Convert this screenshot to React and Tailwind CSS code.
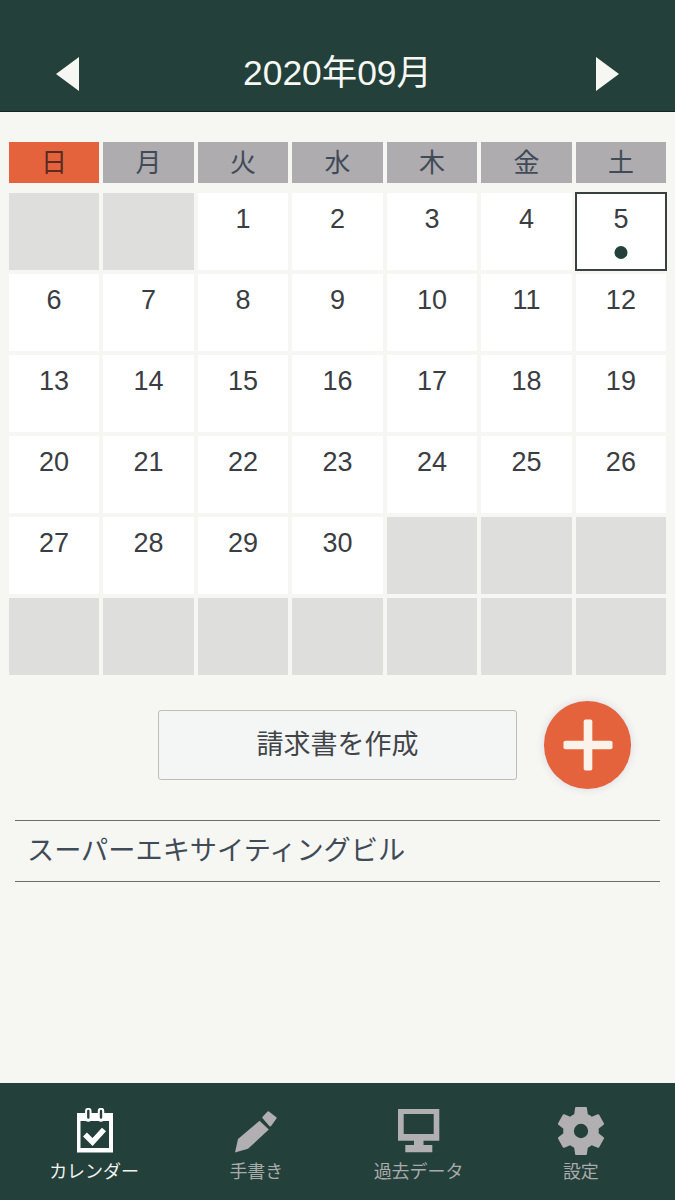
import React from "react";

const FONT = "font-['Liberation_Sans','Noto_Sans_CJK_JP',sans-serif]";
const WEEK = ["日", "月", "火", "水", "木", "金", "土"];
const CELLS = [
  null, null, 1, 2, 3, 4, 5,
  6, 7, 8, 9, 10, 11, 12,
  13, 14, 15, 16, 17, 18, 19,
  20, 21, 22, 23, 24, 25, 26,
  27, 28, 29, 30, null, null, null,
  null, null, null, null, null, null, null,
];

function CalendarIcon() {
  return (
    <svg width="36" height="45" viewBox="0 0 36 45" className="mt-[1px] ml-[1px]">
      <path fillRule="evenodd" fill="#fff" d="M0 5h36v39.500H0zM3.500 13v27H32V13z" />
      <path d="M11.300 3v7.500M24 3v7.500" stroke="#fff" strokeWidth="6.500" strokeLinecap="round" />
      <path d="M11.300 3v6.500M24 3v6.500" stroke="#23403a" strokeWidth="2.400" strokeLinecap="round" />
      <path d="M8 26.500l7.500 7.500L27 21.500" fill="none" stroke="#fff" strokeWidth="5.500" />
    </svg>
  );
}

function PencilIcon() {
  return (
    <svg width="44" height="44" viewBox="0 0 44 44" className="mt-[2px]">
      <path fill="#b1afb1" d="M1 43.500L4 30 25.500 11.800 34.800 20.500 14 39.800z" />
      <path fill="#b1afb1" stroke="#b1afb1" strokeWidth="2" strokeLinejoin="round" d="M29.300 8.500L34.300 3.300 41.700 9 36.300 16.500z" />
    </svg>
  );
}

function MonitorIcon() {
  return (
    <svg width="42" height="44" viewBox="0 0 42 44" className="mt-[2px]">
      <path fillRule="evenodd" fill="#b1afb1" d="M0 0h41.300v31.700H0zM5.700 5v20h30V5z" />
      <path fill="#b1afb1" d="M16 31h9.500v5.500H16zM7.300 36h27v7.300h-27z" />
    </svg>
  );
}

function GearIcon() {
  return (
    <svg width="46" height="48" viewBox="2.300 2 19.400 20" preserveAspectRatio="none">
      <path
        fill="#b1afb1"
        fillRule="evenodd"
        d="M19.430 12.980c.04-.32.07-.64.07-.98s-.03-.66-.07-.98l2.110-1.650c.19-.15.24-.42.12-.64l-2-3.460c-.12-.22-.39-.3-.61-.22l-2.490 1c-.52-.4-1.080-.73-1.690-.98l-.38-2.650C14.460 2.180 14.250 2 14 2h-4c-.25 0-.46.18-.49.42l-.38 2.650c-.61.25-1.170.59-1.690.98l-2.490-1c-.23-.09-.49 0-.61.22l-2 3.460c-.13.22-.07.49.12.64l2.110 1.650c-.04.32-.07.65-.07.98s.03.66.07.98l-2.110 1.650c-.19.15-.24.42-.12.64l2 3.460c.12.22.39.3.61.22l2.490-1c.52.4 1.080.73 1.690.98l.38 2.650c.03.24.24.42.49.42h4c.25 0 .46-.18.49-.42l.38-2.650c.61-.25 1.170-.59 1.690-.98l2.490 1c.23.09.49 0 .61-.22l2-3.460c.12-.22.07-.49-.12-.64l-2.110-1.650zM12 9a3 3 0 1 0 0 6 3 3 0 0 0 0-6z"
      />
    </svg>
  );
}

function Tab({ icon, label, active }) {
  return (
    <div className="flex flex-col items-center">
      <div className="h-[48px] flex items-start justify-center">{icon}</div>
      <span className={`mt-[5px] text-[18px] leading-[24px] ${active ? "text-[#f2f2f0]" : "text-[#a9aaaa]"}`}>{label}</span>
    </div>
  );
}

export default function App() {
  return (
    <div className={`${FONT} relative w-[675px] h-[1200px] bg-[#f6f7f2] flex flex-col overflow-hidden`}>
      <header className="h-[112px] shrink-0 bg-[#23403a] border-b border-[#16261f] flex items-start justify-between px-[56px] pt-[52px]">
        <svg width="23" height="34" viewBox="0 0 23 34" className="mt-[5px]"><path d="M23 0v34L0 17z" fill="#f6f7f2" /></svg>
        <h1 className="text-[35.4px] leading-[42px] text-[#f7f8f4] font-normal">2020年09月</h1>
        <svg width="23" height="34" viewBox="0 0 23 34" className="mt-[5px]"><path d="M0 0v34l23-17z" fill="#f6f7f2" /></svg>
      </header>

      <main className="flex-1 flex flex-col">
        <div className="mt-[30px] px-[9px] grid grid-cols-7 gap-x-[4.25px]">
          {WEEK.map((d, i) => (
            <div
              key={d}
              className={`h-[41px] flex items-center justify-center text-[26px] leading-none ${i === 0 ? "bg-[#e5633c] text-[#5a2c24]" : "bg-[#aeacaf] text-[#414b58]"}`}
            >
              {d}
            </div>
          ))}
        </div>

        <div className="mt-[10px] px-[9px] grid grid-cols-7 gap-x-[4.25px] gap-y-[4px]">
          {CELLS.map((n, i) => {
            if (n === null) return <div key={i} className="h-[77px] bg-[#dededc]" />;
            const selected = n === 5;
            return (
              <div key={i} className="relative h-[77px] bg-white flex justify-center pt-[10px] text-[27px] leading-[32px] text-[#3a3d42]">
                {n}
                {selected && (
                  <>
                    <div className="absolute -inset-[1px] border-2 border-[#3a3f40]" />
                    <div className="absolute left-1/2 -translate-x-1/2 top-[53px] w-[13px] h-[13px] rounded-full bg-[#23403a]" />
                  </>
                )}
              </div>
            );
          })}
        </div>

        <div className="mt-[26px] pl-[158px] flex items-center">
          <button className="w-[359px] h-[70px] pt-[1px] bg-[#f4f5f5] border border-[#bdbdbb] rounded-[3px] text-[27px] text-[#414448]">
            請求書を作成
          </button>
          <div className="ml-[27px] w-[87px] h-[88px] rounded-full bg-[#e5633c] shadow-[0_0_6px_2px_#e3e3ea] flex items-center justify-center">
            <svg width="50" height="52" viewBox="0 0 50 52">
              <rect x="0.500" y="21.700" width="49" height="8.600" rx="1.800" fill="#fbf3ea" />
              <rect x="20.700" y="0.500" width="8.600" height="51" rx="1.800" fill="#fbf3ea" />
            </svg>
          </div>
        </div>

        <div className="mt-[31px] mx-[15px] h-[62px] border-y border-[#6b6e6e] flex items-center pl-[12px] text-[27.2px] text-[#414b58]">
          スーパーエキサイティングビル
        </div>
      </main>

      <nav className="h-[117px] shrink-0 bg-[#23403a] px-[13px] pt-[24px] grid grid-cols-4 content-start">
        <Tab icon={<CalendarIcon />} label="カレンダー" active />
        <Tab icon={<PencilIcon />} label="手書き" />
        <Tab icon={<MonitorIcon />} label="過去データ" />
        <Tab icon={<GearIcon />} label="設定" />
      </nav>
    </div>
  );
}
